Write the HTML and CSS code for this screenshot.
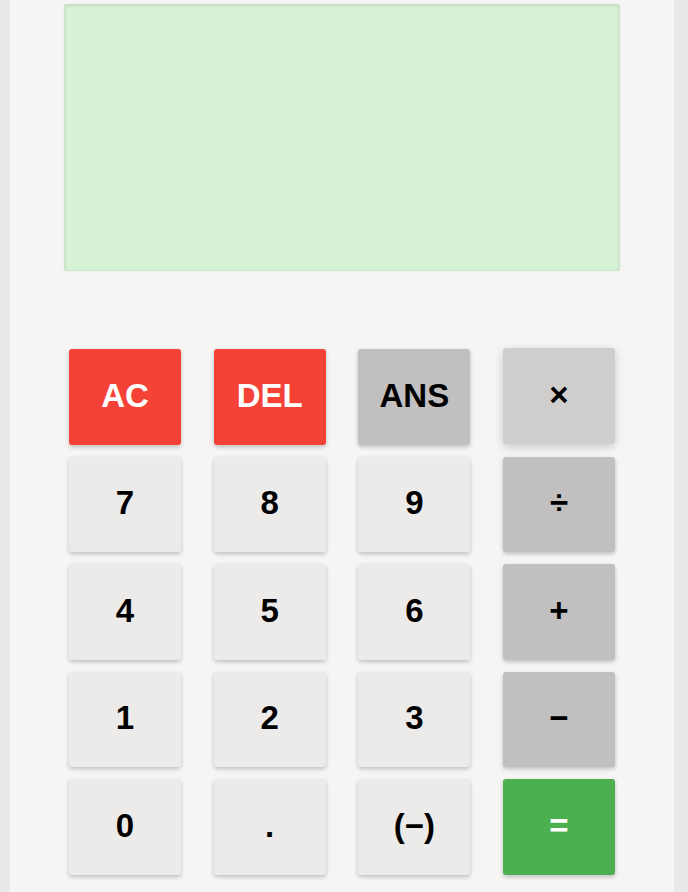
FILE: index.html
```
<!DOCTYPE html>
<html lang="en">
<head>
<meta charset="utf-8">
<title>Calculator</title>
<link rel="stylesheet" href="styles.css">
</head>
<body>
<div class="calculator">
  <div class="display"></div>
  <div class="keys">
    <button class="key key-red">AC</button>
    <button class="key key-red">DEL</button>
    <button class="key key-op">ANS</button>
    <button class="key key-op key-hover">×</button>
    <button class="key">7</button>
    <button class="key">8</button>
    <button class="key">9</button>
    <button class="key key-op">÷</button>
    <button class="key">4</button>
    <button class="key">5</button>
    <button class="key">6</button>
    <button class="key key-op">+</button>
    <button class="key">1</button>
    <button class="key">2</button>
    <button class="key">3</button>
    <button class="key key-op">−</button>
    <button class="key">0</button>
    <button class="key">.</button>
    <button class="key">(−)</button>
    <button class="key key-green">=</button>
  </div>
</div>
</body>
</html>
```
FILE: styles.css
```
html, body {
  margin: 0;
  padding: 0;
  height: 100%;
}
body {
  background: #e9e9e9;
  font-family: "Liberation Sans", Arial, sans-serif;
}
.calculator {
  width: 664px;
  margin-left: 10px;
  min-height: 100%;
  background: #f6f5f3;
  padding-top: 4px;
  padding-bottom: 30px;
  box-sizing: border-box;
}
.display {
  width: 556px;
  height: 267px;
  margin: 0 auto;
  background: #d7f3d6;
  border-radius: 2px;
  box-sizing: border-box;
  border: 1px solid #c9e6c8;
  box-shadow: inset 0 1px 3px rgba(0, 0, 0, 0.12), 0 0 2px rgba(0, 0, 0, 0.08);
}
.keys {
  display: grid;
  grid-template-columns: repeat(4, 112px);
  grid-auto-rows: 95.5px;
  column-gap: 32.67px;
  row-gap: 12px;
  justify-content: center;
  margin-top: 78px;
}
.key {
  border: none;
  border-radius: 3px;
  background: #ecebe9;
  color: #000;
  font-family: "Liberation Sans", Arial, sans-serif;
  font-weight: bold;
  font-size: 33px;
  line-height: 1;
  padding: 0 0 3px 0;
  margin: 0;
  box-shadow: 0 2px 4px rgba(0, 0, 0, 0.22);
}
.key-red {
  background: #f44336;
  color: #fff;
}
.key-op {
  background: #c1bfbf;
}
.key-green {
  background: #4caf50;
  color: #fff;
}
.key-hover {
  background: #d0cecd;
  transform: translateY(-1px);
  box-shadow: 0 3px 10px rgba(0, 0, 0, 0.18);
}
```
